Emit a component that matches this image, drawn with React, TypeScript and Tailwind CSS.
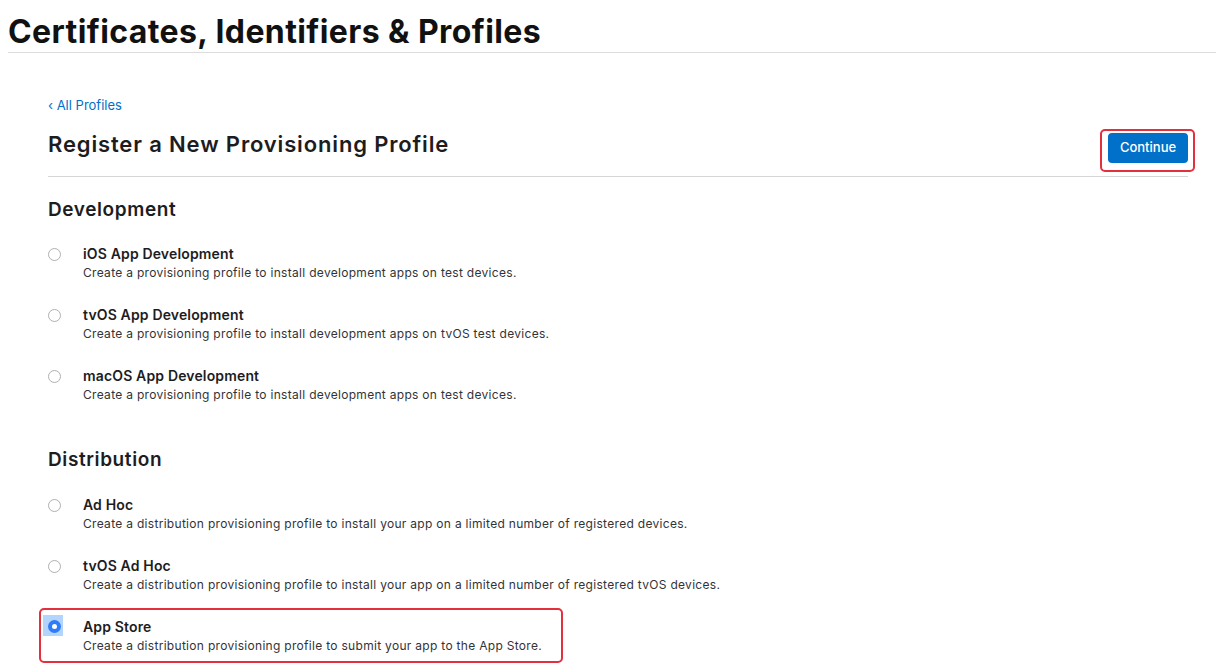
import React from "react";

type Option = { title: string; desc: string; selected?: boolean };

const DEVELOPMENT: Option[] = [
  { title: "iOS App Development", desc: "Create a provisioning profile to install development apps on test devices." },
  { title: "tvOS App Development", desc: "Create a provisioning profile to install development apps on tvOS test devices." },
  { title: "macOS App Development", desc: "Create a provisioning profile to install development apps on test devices." },
];

const DISTRIBUTION: Option[] = [
  { title: "Ad Hoc", desc: "Create a distribution provisioning profile to install your app on a limited number of registered devices." },
  { title: "tvOS Ad Hoc", desc: "Create a distribution provisioning profile to install your app on a limited number of registered tvOS devices." },
  { title: "App Store", desc: "Create a distribution provisioning profile to submit your app to the App Store.", selected: true },
];

const Radio = ({ checked }: { checked?: boolean }) =>
  checked ? (
    <span className="relative mt-[2px] flex h-[13px] w-[13px] shrink-0 items-center justify-center">
      {/* focus highlight */}
      <span className="absolute left-[-5px] top-[-5px] h-[21px] w-[20px] bg-[#b3d4fc]" />
      <span className="relative flex h-[13px] w-[13px] items-center justify-center rounded-full bg-[#2f7cf6]">
        <span className="h-[5px] w-[5px] rounded-full bg-white" />
      </span>
    </span>
  ) : (
    <span className="mt-[3px] h-[13px] w-[13px] shrink-0 rounded-full border border-[#b0b0b0] bg-white" />
  );

const OptionRow = ({ opt }: { opt: Option }) => (
  <div className="relative flex items-start">
    {opt.selected && (
      <span className="pointer-events-none absolute left-[-9px] top-[-10px] h-[55px] w-[524px] rounded-[5px] border-2 border-[#e2303c]" />
    )}
    <div className="flex w-[35px] justify-start">
      <Radio checked={opt.selected} />
    </div>
    <div className="flex flex-col gap-[2px]">
      <div className="text-[14px] font-semibold leading-[18px] tracking-[0.15px] text-[#1d1d1f]">{opt.title}</div>
      <div className="text-[12px] leading-[16px] tracking-[0.3px] text-[#333336]">{opt.desc}</div>
    </div>
  </div>
);

export default function App() {
  return (
    <div className="min-h-[672px] bg-white font-['Inter',sans-serif] text-[#1d1d1f]">
      <header className="ml-2 border-b border-[#dcdcdc] pt-3">
        <h1 className="text-[32px] font-bold leading-[40px] tracking-[0.4px] text-[#111]">
          Certificates, Identifiers &amp; Profiles
        </h1>
      </header>

      <main className="ml-12 mr-[28px]">
        <a className="mt-[43px] block text-[13px] leading-[18px] text-[#0070c9]">‹ All Profiles</a>

        <div className="mt-4 flex items-start justify-between border-b border-[#d6d6d6] pb-[13px]">
          <h2 className="text-[22px] font-semibold leading-[28px] tracking-[0.85px]">
            Register a New Provisioning Profile
          </h2>
          <div className="relative mt-[3px]">
            <span className="pointer-events-none absolute left-[-8px] top-[-4px] h-[43px] w-[95px] rounded-[5px] border-2 border-[#e2303c]" />
            <button className="h-[30px] w-[80px] rounded-[4px] bg-[#0070c9] text-[13px] font-medium text-white">
              Continue
            </button>
          </div>
        </div>

        <h3 className="mt-[21px] text-[19px] font-semibold leading-[24px] tracking-[0.6px]">Development</h3>
        <div className="mt-[23px] flex flex-col gap-[25px]">
          {DEVELOPMENT.map((o) => (
            <OptionRow key={o.title} opt={o} />
          ))}
        </div>

        <h3 className="mt-[45px] text-[19px] font-semibold leading-[24px] tracking-[0.6px]">Distribution</h3>
        <div className="mt-[24px] flex flex-col gap-[25px]">
          {DISTRIBUTION.map((o) => (
            <OptionRow key={o.title} opt={o} />
          ))}
        </div>
      </main>
    </div>
  );
}
